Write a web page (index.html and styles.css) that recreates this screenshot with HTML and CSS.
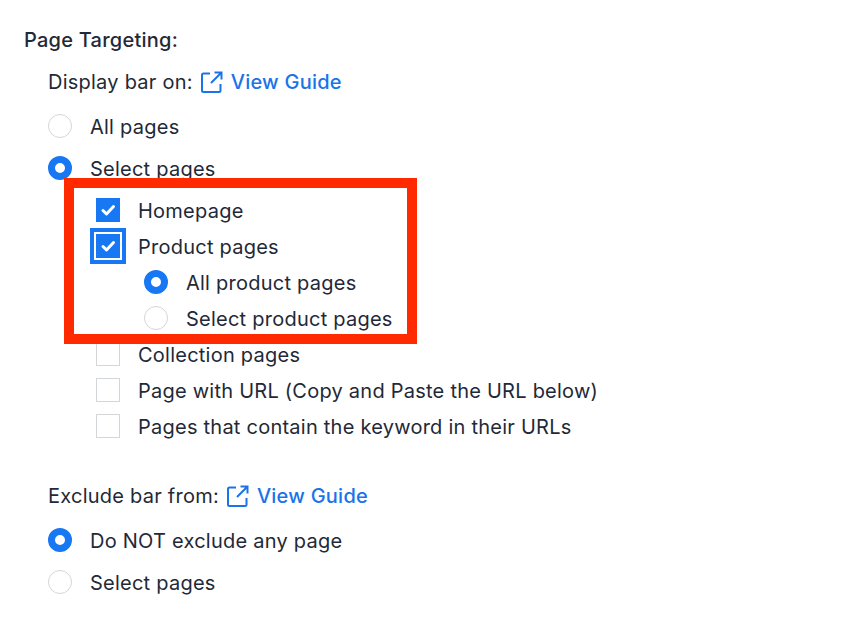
FILE: index.html
```html
<!DOCTYPE html>
<html lang="en">
<head>
    <meta charset="UTF-8">
    <title>Page Targeting</title>
    <link rel="stylesheet" href="styles.css">
</head>
<body>
    <div class="panel">
        <div class="title">Page Targeting:</div>

        <div class="section">
            <div class="heading">
                <span>Display bar on:</span>
                <a class="guide" href="#">
                    <svg class="guide-icon" viewBox="0 0 22 22"><path d="M9 2.500H2.500A1.500 1.500 0 0 0 1 4V19.500A1.500 1.500 0 0 0 2.500 21H18A1.500 1.500 0 0 0 19.500 19.500V13M13.500 1.500H20.500V8.500M20.500 1.500L10 12"/></svg>
                    View Guide
                </a>
            </div>
            <div class="row radio-row first"><span class="radio"></span>All pages</div>
            <div class="row radio-row"><span class="radio on"></span>Select pages</div>
            <div class="sublist">
                <div class="row check-row"><span class="check on"><svg viewBox="0 0 24 24"><path d="M7 12.500L10.500 16L17.500 8.500"/></svg></span>Homepage</div>
                <div class="row check-row"><span class="check on focus"><svg viewBox="0 0 24 24"><path d="M7 12.500L10.500 16L17.500 8.500"/></svg></span>Product pages</div>
                <div class="row nested"><span class="radio on"></span>All product pages</div>
                <div class="row nested"><span class="radio"></span>Select product pages</div>
                <div class="row check-row"><span class="check"></span>Collection pages</div>
                <div class="row check-row"><span class="check"></span>Page with URL (Copy and Paste the URL below)</div>
                <div class="row check-row"><span class="check"></span>Pages that contain the keyword in their URLs</div>
            </div>
        </div>

        <div class="section exclude">
            <div class="heading">
                <span>Exclude bar from:</span>
                <a class="guide" href="#">
                    <svg class="guide-icon" viewBox="0 0 22 22"><path d="M9 2.500H2.500A1.500 1.500 0 0 0 1 4V19.500A1.500 1.500 0 0 0 2.500 21H18A1.500 1.500 0 0 0 19.500 19.500V13M13.500 1.500H20.500V8.500M20.500 1.500L10 12"/></svg>
                    View Guide
                </a>
            </div>
            <div class="row radio-row first"><span class="radio on"></span>Do NOT exclude any page</div>
            <div class="row radio-row"><span class="radio"></span>Select pages</div>
        </div>

        <div class="highlight"></div>
    </div>
</body>
</html>
```

FILE: styles.css
```css
* {margin: 0; padding: 0; box-sizing: border-box;}
body {
    width: 846px;
    height: 626px;
    overflow: hidden;
    background-color: #fff;
    color: #1f2937;
    font-family: Inter, "Liberation Sans", sans-serif;
    font-size: 20px;
    letter-spacing: 0.24px;
}
.panel {
    position: relative;
    height: 100%;
    padding: 28px 0 0 24px;
}
.title {
    height: 24px;
    line-height: 24px;
    font-weight: 500;
}
.section {
    margin-top: 18px;
    padding-left: 24px;
}
.exclude {
    margin-top: 46px;
}
.heading {
    display: flex;
    align-items: center;
    gap: 8px;
    height: 24px;
}
.guide {
    display: flex;
    align-items: center;
    gap: 8px;
    color: #1a73e8;
    font-weight: 500;
    text-decoration: none;
}
.guide-icon {
    width: 22px;
    height: 22px;
    fill: none;
    stroke: #1a73e8;
    stroke-width: 2;
}
.row {
    display: flex;
    align-items: flex-start;
    height: 24px;
    line-height: 26px;
    white-space: nowrap;
}
.radio-row {
    margin-top: 18px;
    gap: 18px;
}
.radio-row.first {
    margin-top: 20px;
}
.sublist {
    display: flex;
    flex-direction: column;
    gap: 12px;
    margin-top: 18px;
    padding-left: 48px;
}
.check-row {
    gap: 18px;
}
.nested {
    gap: 18px;
    padding-left: 48px;
}
.radio {
    flex: none;
    width: 24px;
    height: 24px;
    border: 1px solid #d3d6d9;
    border-radius: 50%;
    background-color: #fff;
}
.radio.on {
    border: 7.500px solid #1877f2;
}
.check {
    flex: none;
    width: 24px;
    height: 24px;
    border: 1px solid #d3d6d9;
    background-color: #fff;
}
.check.on {
    border: none;
    background-color: #1877f2;
}
.check svg {
    display: block;
    width: 24px;
    height: 24px;
    fill: none;
    stroke: #fff;
    stroke-width: 3;
    stroke-linecap: round;
    stroke-linejoin: round;
}
.check.focus {
    box-shadow: 0 0 0 2px #fff, 0 0 0 6px #1877f2;
}
.highlight {
    position: absolute;
    left: 64px;
    top: 178px;
    width: 353px;
    height: 166px;
    border: 10px solid #ff2a00;
}
```
